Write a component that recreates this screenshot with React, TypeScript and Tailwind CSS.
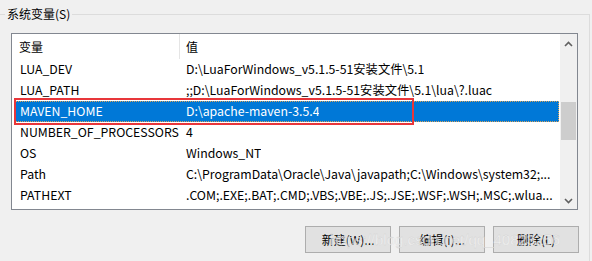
import React from 'react';

type Row = { name: string; value: string };

const rows: Row[] = [
  { name: 'LUA_DEV', value: 'D:\\LuaForWindows_v5.1.5-51安装文件\\5.1' },
  { name: 'LUA_PATH', value: ';;D:\\LuaForWindows_v5.1.5-51安装文件\\5.1\\lua\\?.luac' },
  { name: 'MAVEN_HOME', value: 'D:\\apache-maven-3.5.4' },
  { name: 'NUMBER_OF_PROCESSORS', value: '4' },
  { name: 'OS', value: 'Windows_NT' },
  { name: 'Path', value: 'C:\\ProgramData\\Oracle\\Java\\javapath;C:\\Windows\\system32;...' },
  { name: 'PATHEXT', value: '.COM;.EXE;.BAT;.CMD;.VBS;.VBE;.JS;.JSE;.WSF;.WSH;.MSC;.wlua...' },
];

const font = { fontFamily: '"Noto Sans CJK SC", "Noto Sans", sans-serif' };

const Chevron: React.FC<{ down?: boolean }> = ({ down }) => (
  <svg width="9" height="6" viewBox="0 0 9 6" className={down ? 'rotate-180' : ''}>
    <path d="M1 5 L4.5 1.5 L8 5" fill="none" stroke="#606060" strokeWidth="1.6" />
  </svg>
);

const Button: React.FC<{ label: string }> = ({ label }) => (
  <button className="w-[86px] h-[27px] bg-[#e1e1e1] border border-[#adadad] text-[12px] text-black flex items-center justify-center">
    {label}
  </button>
);

export default function App() {
  return (
    <div className="w-[592px] h-[261px] bg-[#f0f0f0] overflow-hidden relative text-black" style={font}>
      {/* group box */}
      <div className="relative mt-[14px] mr-[2px] h-[247px] border-t border-r border-[#dcdcdc]">
        <span className="absolute left-[5px] -top-[10px] px-[2px] bg-[#f0f0f0] text-[12px] leading-[18px]">
          系统变量(S)
        </span>

        {/* list view */}
        <div className="ml-[11px] mt-[18px] w-[567px] h-[177px] border border-[#828790] bg-white flex">
          <div className="flex-1 min-w-0">
            <div className="h-[25px] flex items-center text-[12px]">
              <div className="w-[168px] pl-[7px] border-r border-[#e5e5e5] h-full flex items-center">变量</div>
              <div className="pl-[6px]">值</div>
            </div>
            {rows.map((r) => {
              const sel = r.name === 'MAVEN_HOME';
              return (
                <div key={r.name} className="h-[21px] pl-[3px] pr-[1px]">
                  <div
                    className={
                      'h-full flex items-center text-[12.3px] whitespace-nowrap overflow-hidden ' +
                      (sel ? 'bg-[#0078d7] text-white outline-1 outline-dotted outline-[#d9a35a] -outline-offset-1' : '')
                    }
                  >
                    <div className="w-[168px] pl-[5px] shrink-0">{r.name}</div>
                    <div className="pl-[3px] overflow-hidden">{r.value}</div>
                  </div>
                </div>
              );
            })}
          </div>
          {/* scrollbar */}
          <div className="w-[17px] bg-[#f0f0f0] flex flex-col items-center">
            <div className="h-[17px] w-full flex items-center justify-center mt-[1px]">
              <Chevron />
            </div>
            <div className="mt-[50px] w-[15px] h-[38px] bg-[#cdcdcd]" />
            <div className="flex-1" />
            <div className="h-[17px] w-full flex items-center justify-center">
              <Chevron down />
            </div>
          </div>
        </div>

        {/* buttons */}
        <div className="mt-[16px] flex justify-end gap-[8px] pr-[10px]">
          <Button label="新建(W)..." />
          <Button label="编辑(I)..." />
          <Button label="删除(L)" />
        </div>
      </div>

      {/* highlight box drawn over the selected row */}
      <div className="absolute left-[14px] top-[98px] w-[400px] h-[27px] border-2 border-[#e8363a] pointer-events-none" />

      {/* watermark */}
      <div
        className="absolute left-[330px] top-[229px] text-[15px] text-white/60 pointer-events-none whitespace-nowrap"
        style={{ fontFamily: '"Liberation Sans", sans-serif', WebkitTextStroke: '0.3px #cfcfcf' }}
      >
        https://blog.csdn.net/qq_40823256
      </div>
    </div>
  );
}
